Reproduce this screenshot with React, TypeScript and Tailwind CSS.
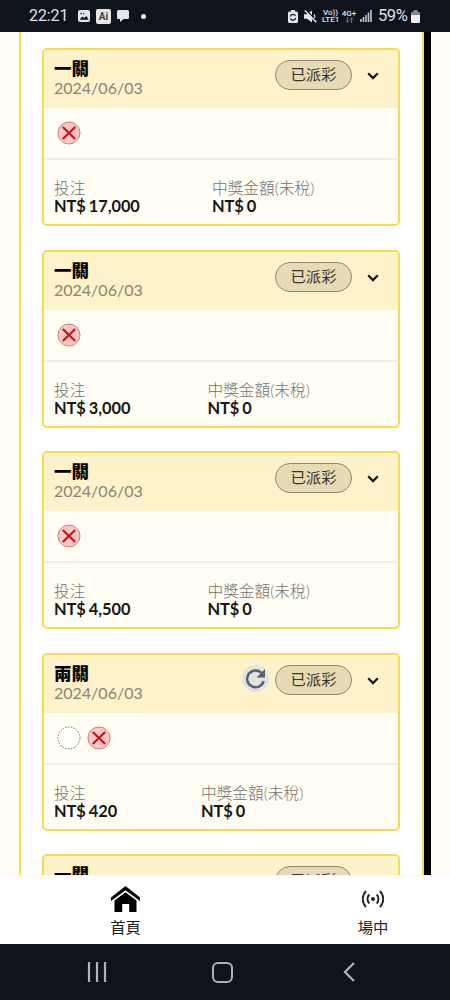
interface Bet {
  title: string;
  date: string;
  stake: string;
  prize: string;
  stakeWidth: string;
  legs: LegResult[];
  refundable?: boolean;
}

type LegResult = 'void' | 'lost';

const bets: Bet[] = [
  { title: '一關', date: '2024/06/03', stake: 'NT$ 17,000', prize: 'NT$ 0', stakeWidth: 'w-[158px]', legs: ['lost'] },
  { title: '一關', date: '2024/06/03', stake: 'NT$ 3,000', prize: 'NT$ 0', stakeWidth: 'w-[153.5px]', legs: ['lost'] },
  { title: '一關', date: '2024/06/03', stake: 'NT$ 4,500', prize: 'NT$ 0', stakeWidth: 'w-[153.5px]', legs: ['lost'] },
  { title: '兩關', date: '2024/06/03', stake: 'NT$ 420', prize: 'NT$ 0', stakeWidth: 'w-[147px]', legs: ['void', 'lost'], refundable: true },
  { title: '一關', date: '2024/06/03', stake: 'NT$ 1,000', prize: 'NT$ 0', stakeWidth: 'w-[153.5px]', legs: ['lost'] },
];

function StatusBar() {
  return (
    <div className="flex h-8 shrink-0 items-center bg-[#0f141c] pl-[29px] font-['Roboto'] text-[#dfe1e4]">
      <span className="w-[49px] text-[16px] leading-8 tracking-[-0.1px]">22:21</span>
      <svg className="h-3 w-3" viewBox="0 0 12 12">
        <rect width="12" height="12" rx="2" fill="#e4e6e8" />
        <path d="M1.5 9.8 4.3 6.5l1.8 1.6L8.4 6l2.3 3.8Z" fill="#0f141c" />
        <path d="M2.5 3.5h1.2M5.2 3.5h1" stroke="#0f141c" strokeWidth="1.3" />
      </svg>
      <span className="ml-[6px] flex h-[15px] w-[15px] items-center justify-center rounded-[2px] bg-[#e4e6e8] text-[10px] leading-[15px] font-bold text-[#3c4046]">
        Ai
      </span>
      <svg className="ml-[6px] h-3 w-3" viewBox="0 0 12 12">
        <path d="M1.5 0h9A1.5 1.5 0 0 1 12 1.5v6A1.5 1.5 0 0 1 10.5 9H6.5L3 12V9H1.5A1.5 1.5 0 0 1 0 7.5v-6A1.5 1.5 0 0 1 1.5 0Z" fill="#e4e6e8" />
      </svg>
      <span className="ml-[12px] h-[5px] w-[5px] rounded-full bg-[#e4e6e8]" />

      <svg className="ml-[142px] h-[13px] w-[10px]" viewBox="0 0 10 13">
        <path d="M3 0h4v1.5h1.5A1.5 1.5 0 0 1 10 3v8.5A1.5 1.5 0 0 1 8.5 13h-7A1.5 1.5 0 0 1 0 11.5V3a1.5 1.5 0 0 1 1.5-1.5H3Z" fill="#e4e6e8" />
        <path d="M2.3 6.5A2.8 2.8 0 0 1 7.5 6M7.7 8A2.8 2.8 0 0 1 2.5 8.6" fill="none" stroke="#0f141c" strokeWidth="1.2" />
      </svg>
      <svg className="ml-[6px] h-[13px] w-[13px]" viewBox="0 0 13 13">
        <path d="M0 4.3h3L8 .5v12L3 8.7H0Z" fill="#e4e6e8" />
        <path d="M2.3.3 12.8 10.8" stroke="#0f141c" strokeWidth="1.3" />
        <path d="M.8.5 12.3 12.3" stroke="#e4e6e8" strokeWidth="1.5" />
        <path d="M10 4.5q1.5 1.7.5 3.8" fill="none" stroke="#e4e6e8" strokeWidth="1.2" />
      </svg>
      <span className="ml-[5px] w-[17px] text-center text-[8px] leading-[7px] font-medium whitespace-nowrap">
        Vo))
        <br />
        LTE1
      </span>
      <span className="ml-[3px] flex w-[14px] flex-col items-center text-[8px] leading-[7px] font-medium">
        4G+
        <svg className="h-[6px] w-[9px]" viewBox="0 0 9 6">
          <path d="M2.5 0v5M.8 3.5l1.7 1.8 1.7-1.8M6.5 6V1M4.8 2.5 6.5.7l1.7 1.8" fill="none" stroke="#72777e" />
        </svg>
      </span>
      <svg className="ml-[4px] h-3 w-3" viewBox="0 0 12 12">
        <path d="M1 9v3M3.5 7v5M6 5v7M8.5 2.5V12M11 0v12" stroke="#c4c7ca" strokeWidth="1.6" />
      </svg>
      <span className="ml-[6px] w-[31px] text-[16.5px] leading-8 tracking-[-0.4px]">59%</span>
      <svg className="ml-[2px] h-[13px] w-[9px]" viewBox="0 0 9 13">
        <path d="M2.5 0h4v2H8q1 0 1 1v3H0V3q0-1 1-1h1.5Z" fill="#858a90" />
        <path d="M0 5h9v6.5Q9 13 7.5 13h-6Q0 13 0 11.5Z" fill="#eff0f1" />
      </svg>
    </div>
  );
}

function LegIcon({ result }: { result: LegResult }) {
  if (result === 'void') {
    return (
      <svg className="h-6 w-6" viewBox="0 0 24 24">
        <circle cx="12" cy="12" r="11" fill="#fffffb" stroke="#777" strokeDasharray="1.6 1.2" />
      </svg>
    );
  }
  return (
    <svg className="h-6 w-6" viewBox="0 0 24 24">
      <circle cx="12" cy="12" r="11" fill="#ffc5c2" stroke="#b98784" />
      <path d="m5.8 6 12.4 12M18.2 6 5.8 18" stroke="#bd161c" strokeWidth="2.2" />
    </svg>
  );
}

function RefreshIcon() {
  return (
    <svg className="h-[27px] w-[27px]" viewBox="0 0 27 27">
      <circle cx="13.5" cy="13.5" r="13.5" fill="#e3e3e6" />
      <path d="M20.2 8.7A8.4 8.4 0 1 0 21.6 16.2" fill="none" stroke="#5a6168" strokeWidth="2.5" />
      <path d="M23 4v8.5h-8.500Z" fill="#5a6168" />
    </svg>
  );
}

function Amount({ label, value }: { label: string; value: string }) {
  return (
    <div>
      <p className="text-[15.7px] leading-[18px] font-light whitespace-nowrap text-[#74726d]">{label}</p>
      <p className="text-[16.4px] leading-[17px] font-bold tracking-[-0.05px] whitespace-nowrap text-[#171714] [word-spacing:-1px]">
        {value}
      </p>
    </div>
  );
}

function BetCard({ bet }: { bet: Bet }) {
  return (
    <div className="h-[178px] shrink-0 overflow-hidden rounded-[5px] border-2 border-[#f3dc4e] bg-[#fffdf4]">
      <div className="flex h-[58px] bg-[#fef2cb] pl-[10px]">
        <div className="flex-1 pt-[9px]">
          <p className="text-[17.5px] leading-[20px] font-black text-black">{bet.title}</p>
          <p className="text-[16px] leading-[17px] text-[#898575]">{bet.date}</p>
        </div>
        {bet.refundable && (
          <span className="mt-[10px] mr-[6px]">
            <RefreshIcon />
          </span>
        )}
        <span className="mt-[10px] flex h-[30px] w-[77px] items-center justify-center rounded-full border border-[#8e866b] bg-[#e6dbb5] pb-px text-[15.3px] text-[#36342b]">
          已派彩
        </span>
        <svg className="mt-[22px] mr-[19px] ml-[15px] h-[8px] w-[12px]" viewBox="0 0 12 8">
          <path d="m1.2 1.3 4.8 4.8 4.8-4.8" fill="none" stroke="#15150f" strokeWidth="2.2" />
        </svg>
      </div>
      <div className="flex h-[52px] items-center gap-[6px] border-b-2 border-[#f3eee6] pl-[12.5px]">
        {bet.legs.map((leg, i) => (
          <LegIcon key={i} result={leg} />
        ))}
      </div>
      <div className="flex pt-[19px] pl-[10px]">
        <div className={bet.stakeWidth}>
          <Amount label="投注" value={bet.stake} />
        </div>
        <Amount label="中獎金額(未稅)" value={bet.prize} />
      </div>
    </div>
  );
}

function TabBar() {
  return (
    <div className="flex h-[69px] shrink-0 border-t border-[#faf8f6] bg-white text-[15.3px] leading-5 text-[#20201e]">
      <div className="ml-[2px] flex w-[247px] shrink-0 flex-col items-center pt-[10px]">
        <svg className="h-[26px] w-[29px]" viewBox="0 0 29 26">
          <path d="M14.5 0 29 11.5V15L14.5 4.2 0 15v-3.5Z" fill="#000" />
          <path d="M14.5 6.3 25.5 14.5V26h-7.3v-8h-7v8H3.5V14.5Z" fill="#000" />
        </svg>
        <span className="mt-[5px]">首頁</span>
      </div>
      <div className="flex w-[248px] shrink-0 flex-col items-center pt-[13px]">
        <svg className="h-5 w-[22px]" viewBox="0 0 22 20" fill="none" stroke="#242424" strokeWidth="1.9">
          <circle cx="11" cy="10" r="2" fill="#242424" stroke="none" />
          <path d="M7.3 5.5a6.5 6.5 0 0 0 0 9M14.7 5.5a6.5 6.5 0 0 1 0 9M4 2a11.5 11.5 0 0 0 0 16M18 2a11.5 11.5 0 0 1 0 16" />
        </svg>
        <span className="mt-[8px]">場中</span>
      </div>
    </div>
  );
}

function SystemNav() {
  return (
    <div className="flex h-14 shrink-0 items-center bg-[#0f141c] pl-[87px]">
      <svg className="h-5 w-5" viewBox="0 0 20 20" stroke="#afb3b8" strokeWidth="2.2">
        <path d="M2 0v20M10 0v20M18 0v20" />
      </svg>
      <span className="ml-[105px] h-[21px] w-[21px] rounded-[6px] border-[2.5px] border-[#afb3b8]" />
      <svg className="ml-[110px] h-5 w-3" viewBox="0 0 12 20">
        <path d="M11 1 2 10l9 9" fill="none" stroke="#afb3b8" strokeWidth="2.3" />
      </svg>
    </div>
  );
}

export default function App() {
  return (
    <div className="flex h-[1000px] w-[450px] flex-col overflow-hidden bg-[#fffdf6] font-['Lato','Noto_Sans_CJK_TC',sans-serif]">
      <StatusBar />
      <div className="flex min-h-0 flex-1 overflow-hidden">
        <div className="ml-[19px] flex w-[405px] shrink-0 flex-col gap-[23.5px] border-x-2 border-[#f3dc4e] bg-white pt-4 pr-[22px] pl-[21px]">
          {bets.map((bet, i) => (
            <BetCard key={i} bet={bet} />
          ))}
        </div>
        <div className="w-[7px] bg-black" />
      </div>
      <TabBar />
      <SystemNav />
    </div>
  );
}
